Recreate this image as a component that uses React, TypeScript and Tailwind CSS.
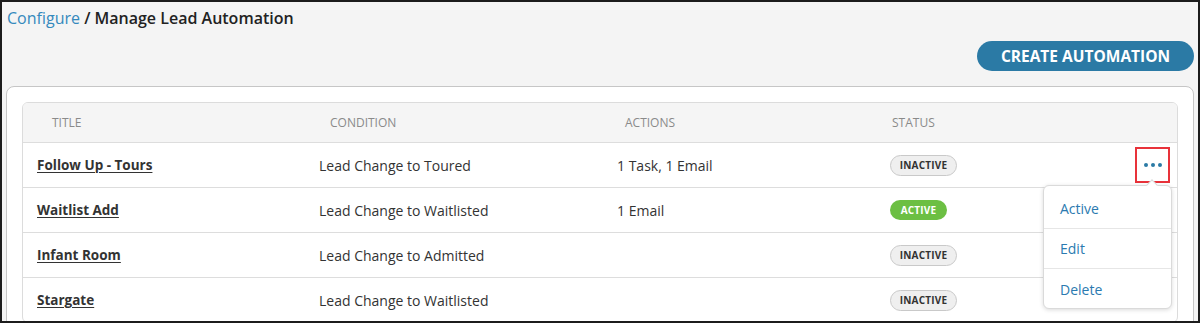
import React from "react";

const rows = [
  { title: "Follow Up - Tours", cond: "Lead Change to Toured", actions: "1 Task, 1 Email", active: false, menu: true },
  { title: "Waitlist Add", cond: "Lead Change to Waitlisted", actions: "1 Email", active: true },
  { title: "Infant Room", cond: "Lead Change to Admitted", actions: "", active: false },
  { title: "Stargate", cond: "Lead Change to Waitlisted", actions: "", active: false },
];

function Badge({ active }: { active: boolean }) {
  return active ? (
    <span className="inline-flex items-center justify-center h-[20px] w-[57px] rounded-full bg-[#6cbf43] text-white text-[10px] font-bold tracking-[0.2px]">
      ACTIVE
    </span>
  ) : (
    <span className="inline-flex items-center justify-center h-[21px] w-[67px] rounded-full bg-[#efefef] border border-[#c9c9c9] text-[#333] text-[10px] font-bold tracking-[0.2px]">
      INACTIVE
    </span>
  );
}

export default function App() {
  return (
    <div
      className="relative w-[1200px] h-[323px] overflow-hidden border-2 border-[#1c1c1c] bg-[#f4f4f4] px-[4px]"
      style={{ fontFamily: '"Open Sans", "Liberation Sans", sans-serif' }}
    >
      <div className="pt-[6px] pl-[1px] h-[26px] leading-[20px] text-[16px]">
        <span className="text-[#3589bd]">Configure</span>
        <span className="text-[#222] font-semibold"> / Manage Lead Automation</span>
      </div>
      <div className="mt-[13px] flex justify-end pr-[0px]">
        <button className="h-[30px] w-[217px] rounded-full bg-[#2b7aa5] text-white text-[15.5px] font-bold tracking-[0px] leading-[30px]">
          CREATE AUTOMATION
        </button>
      </div>
      <div className="mt-[15px] w-[1188px] h-[260px] rounded-[8px] border border-[#c6c6c6] bg-white p-[15px]">
        <div className="w-[1156px] rounded-[6px] border border-[#dcdcdc] overflow-hidden">
          <div className="grid grid-cols-[282px_298px_268px_1fr] h-[39px] items-center bg-[#f5f5f5] text-[12px] text-[#8a8a8a] uppercase">
            <div className="pl-[29px]">Title</div>
            <div className="pl-[25px]">Condition</div>
            <div className="pl-[22px]">Actions</div>
            <div className="pl-[21px]">Status</div>
          </div>
          {rows.map((r) => (
            <div
              key={r.title}
              className="grid grid-cols-[282px_298px_268px_1fr] h-[45px] items-center border-t border-[#dddddd] text-[14px] text-[#333]"
            >
              <div className="pl-[14px] text-[13.5px] font-bold underline underline-offset-2 decoration-1">{r.title}</div>
              <div className="pl-[14px]">{r.cond}</div>
              <div className="pl-[14px]">{r.actions}</div>
              <div className="pl-[19px] flex items-center justify-between pr-[13px]">
                <Badge active={r.active} />
                {r.menu && (
                  <span className="flex gap-[3px] items-center mr-[2px]">
                    <span className="w-[4px] h-[4px] rounded-full bg-[#2b7aa5]" />
                    <span className="w-[4px] h-[4px] rounded-full bg-[#2b7aa5]" />
                    <span className="w-[4px] h-[4px] rounded-full bg-[#2b7aa5]" />
                  </span>
                )}
              </div>
            </div>
          ))}
        </div>
      </div>

      <div className="absolute left-[1133px] top-[145px] w-[35px] h-[36px] border-2 border-[#e8323a]" />

      <div className="absolute left-[1041px] top-[183px] w-[129px] h-[124px] rounded-[6px] border border-[#dadada] bg-white shadow-[0_1px_4px_rgba(0,0,0,0.15)] text-[14px] text-[#2b7ab0]">
        <div className="absolute -top-[5px] left-[104px] w-[8px] h-[8px] rotate-45 bg-white border-l border-t border-[#dadada]" />
        <div className="flex flex-col pt-[3px]">
          <div className="h-[40px] flex items-center pl-[16px] border-b border-[#e6e6e6]">Active</div>
          <div className="h-[40px] flex items-center pl-[16px] border-b border-[#e6e6e6]">Edit</div>
          <div className="h-[40px] flex items-center pl-[16px]">Delete</div>
        </div>
      </div>
    </div>
  );
}
